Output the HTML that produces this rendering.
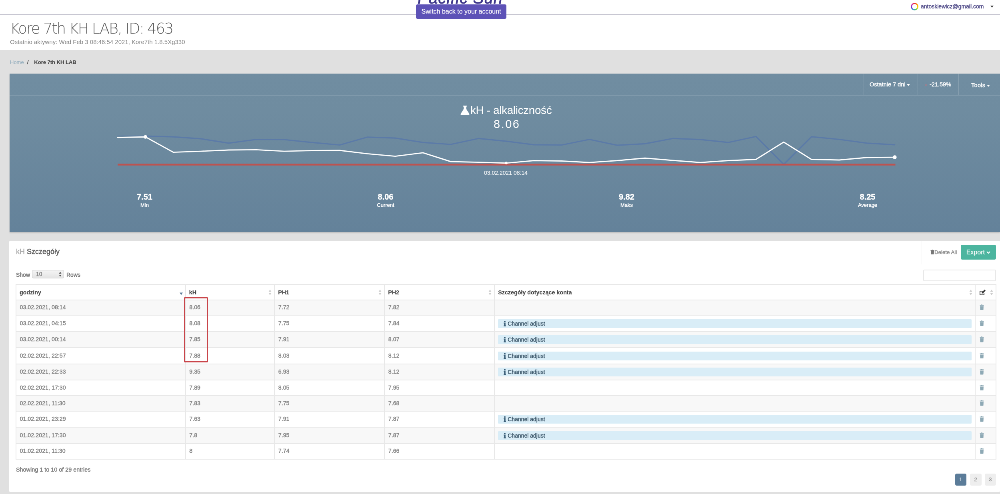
<!DOCTYPE html>
<html lang="pl"><head><meta charset="utf-8"><title>Kore 7th KH LAB</title>
<style>
*{box-sizing:border-box;margin:0;padding:0}
html,body{width:1000px;height:494px;overflow:hidden;background:#e0e0e0}
body{font-family:"Liberation Sans",sans-serif;color:#555;-webkit-text-stroke:.45px}
#w{will-change:transform;position:absolute;left:0;top:0;width:2500px;height:1235px;transform:scale(.4);transform-origin:0 0;background:#e0e0e0;overflow:hidden}
.abs{position:absolute}
#nav{position:absolute;left:0;top:0;width:2500px;height:36px;background:#fff;border-bottom:1.5px solid #7f7ca8}
#logo{-webkit-text-stroke:.9px;position:absolute;left:1044px;top:-25.500px;font-size:40px;font-style:italic;color:#3b3489;letter-spacing:1.2px;white-space:nowrap;line-height:41px}
#sw{-webkit-text-stroke:.2px;z-index:5;position:absolute;left:1040px;top:11px;width:226px;height:36px;background:#5d52b7;border-radius:4px;color:#fff;font-size:16px;line-height:36px;text-align:center;white-space:nowrap}
#ring{position:absolute;left:2277px;top:7px;width:19px;height:19px;border-radius:50%;background:conic-gradient(#e33,#f90,#fd0,#5c5,#39d,#63c,#d3a,#e33)}
#ring:after{content:"";position:absolute;left:3px;top:3px;width:13px;height:13px;border-radius:50%;background:#fff}
#mail{position:absolute;left:2302px;top:8px;font-size:14px;line-height:16px;color:#4b4685;white-space:nowrap}
#caret{position:absolute;left:2476px;top:14px;border:4px solid transparent;border-top:5px solid #444}
#hdr{position:absolute;left:0;top:37px;width:2500px;height:88px;background:#fff}
#title{-webkit-text-stroke:0;font-family:"DejaVu Sans","Liberation Sans",sans-serif;font-weight:200;position:absolute;left:25px;top:51.5px;font-size:37px;line-height:40px;letter-spacing:-2.2px;color:#5a5a5a;white-space:nowrap}
#sub{-webkit-text-stroke:0;position:absolute;left:25px;top:96px;font-size:15px;line-height:18px;color:#858585;white-space:nowrap}
#bc{position:absolute;left:25px;top:148px;font-size:13px;line-height:16px;white-space:nowrap;color:#444}
#bc a{color:#8eaabb;text-decoration:none;-webkit-text-stroke:0}
#bc i{font-style:normal;margin:0 8px 0 8px}
#bc b{margin-left:6px;-webkit-text-stroke:.15px}
#panel{position:absolute;left:24px;top:184px;width:2476px;height:396px;background:linear-gradient(#708da1,#6f8ca0 25%,#64829a);box-shadow:0 2px 3px rgba(0,0,0,.18)}
#tb{position:absolute;left:0;top:0;width:100%;height:54px}
#tbl{position:absolute;left:0;top:53px;width:100%;height:1.6px;background:rgba(255,255,255,.15)}
.vs{position:absolute;top:0;width:1px;height:54px;background:rgba(255,255,255,.2)}
.tbt{position:absolute;top:19px;font-size:14.5px;line-height:16px;color:#fff;white-space:nowrap}
.car{display:inline-block;border:4px solid transparent;border-top:5px solid #fff;border-bottom:0;vertical-align:middle;margin-left:4px}
#ct{-webkit-text-stroke:0;position:absolute;left:1150px;top:259px;white-space:nowrap;color:#fff;font-size:28px;line-height:34px;letter-spacing:-.4px}
#ct svg{width:25px;height:24px;vertical-align:-3px;margin-right:1px;fill:#fff}
#cv{-webkit-text-stroke:0;position:absolute;left:1234px;top:293px;color:#fff;font-size:29px;line-height:34px;letter-spacing:2.5px;white-space:nowrap}
#dl{-webkit-text-stroke:.15px;position:absolute;left:1210px;top:424px;color:#fff;font-size:14px;line-height:16px;white-space:nowrap;opacity:.9}
.stat{position:absolute;top:480px;width:300px;text-align:center;color:#fff}
.stat b{display:block;font-size:20px;line-height:24px}
.stat span{display:block;font-size:13px;line-height:15px;margin-top:1px}
#card{position:absolute;left:23px;top:602px;width:2477px;height:628px;border-radius:3px;background:#fff}
#ch{position:absolute;left:40px;top:618px;font-size:18px;line-height:22px;color:#555;white-space:nowrap}
#ch span{color:#aaa}
#cvs{position:absolute;left:2304px;top:603px;width:1px;height:58px;background:#eee}
#del{position:absolute;left:2326px;top:623px;font-size:13.3px;line-height:16px;color:#8a8a8a;white-space:nowrap}
#del svg{width:10px;height:12px;fill:#777;vertical-align:-1px}
#exp{-webkit-text-stroke:.2px;position:absolute;left:2402px;top:612px;width:88px;height:37px;border-radius:4px;background:#4cb59f;color:#fff;font-size:16px;line-height:37px;text-align:center;white-space:nowrap}
#show{position:absolute;left:40px;top:679px;font-size:14px;line-height:16px;color:#6e6e6e;white-space:nowrap}
#sel{position:absolute;left:80px;top:675px;width:80px;height:21px;border:1px solid #ccc;border-radius:4px;background:linear-gradient(#f4f4f4,#e4e4e4);font-size:14px;line-height:19px;padding-left:9px;color:#808080}
#sel svg{position:absolute;right:5px;top:3px;width:7px;height:13px;fill:#555}
#rows{position:absolute;left:166px;top:679px;font-size:14px;line-height:16px;color:#6e6e6e}
#srch{position:absolute;left:2308px;top:674px;width:182px;height:29px;border:2px solid #e8e8e8;border-radius:3px;background:#fff}
table{position:absolute;left:39px;top:710.1px;width:2450px;border-collapse:collapse;table-layout:fixed;font-size:14.3px;color:#808080}
th,td{border:2px solid #e8e8e8;padding:0 0 0 8.5px;text-align:left;white-space:nowrap;overflow:hidden;position:relative}
th{-webkit-text-stroke:.15px;height:38.5px;font-weight:bold;color:#444;font-size:14.3px;padding-left:8px;padding-top:2px}
td{height:38.75px;padding-bottom:1.5px}
tr.b td{height:40.5px}
tr.odd td{background:#f8f8f8}
tr.even td{background:#fff}
.sort{position:absolute;right:6px;top:12px;width:8px;height:14px;fill:#cdcdcd}
.sort.act{fill:#5b7c99}
td.bd{padding:0 8px 0 8px}
.badge{height:22px;background:#d9edf7;border-radius:2px;color:#3a5568;font-size:14px;line-height:22px;padding-left:14px}
.badge .info{width:6px;height:14px;fill:#3d6079;vertical-align:-2px;margin-right:4px}
td.tc{padding:0;text-align:center}
.trash{width:11px;height:14.5px;fill:#8ea9b5;vertical-align:middle;margin-left:-19px;margin-top:-4px}
#rr{position:absolute;left:460px;top:742.5px;width:60px;height:163.5px;border:3px solid #c9454a;border-radius:2px}
#info{position:absolute;left:40px;top:1166px;font-size:14.4px;line-height:16px;color:#777;white-space:nowrap}
.pg{-webkit-text-stroke:.3px;position:absolute;top:1184px;height:30px;width:28.5px;border-radius:4px;font-size:13.5px;line-height:30px;text-align:center;background:#eee;color:#8f8f8f}
.pg.on{background:#5b7c99;color:#fff;-webkit-text-stroke:0}
</style></head><body>
<div id="w">
<div id="nav"></div>
<div id="logo">Pacific Sun</div>
<div id="sw">Switch back to your account</div>
<div id="ring"></div><div id="mail">antoskiewicz@gmail.com</div><div id="caret"></div>
<div id="hdr"></div>
<div id="title">Kore 7th KH LAB, ID: 463</div>
<div id="sub">Ostatnio aktywny: Wed Feb 3 08:46:54 2021, Kore7th 1.8.5Xg330</div>
<div id="bc"><a>Home</a><i>/</i><b>Kore 7th KH LAB</b></div>

<div id="panel">
 <div id="tbl"></div><div id="tb">
  <div class="vs" style="left:2135px"></div><div class="vs" style="left:2270px"></div><div class="vs" style="left:2372px"></div>
  <div class="tbt" style="left:2150px">Ostatnie 7 dni<span class="car"></span></div>
  <div class="tbt" style="left:2287px"><span style="color:#c9727c;font-size:8px;margin-right:5px;-webkit-text-stroke:0">&#9660;</span>-21.59%</div>
  <div class="tbt" style="left:2404px;top:21px;letter-spacing:.3px">Tools<span class="car"></span></div>
 </div>
</div>
<svg class="abs" style="left:0;top:0" width="2500" height="700" viewBox="0 0 2500 700">
 <polyline points="294.2,338.5 363.6,340.0" fill="none" stroke="#5577b0" stroke-opacity=".22" stroke-width="3" stroke-linecap="round"/>
 <polyline points="363.6,340.0 433.0,342.2 502.4,346.9 571.8,357.8 641.1,348.5 710.5,349.0 779.9,356.2 849.2,362.5 918.6,342.8 988.0,345.2 1057.4,356.2 1126.8,361.0 1196.1,346.2 1265.5,353.1 1334.9,361.9 1404.2,362.5 1473.6,348.5 1543.0,363.1 1612.4,359.4 1681.8,346.2 1751.1,348.8 1820.5,356.2 1889.9,341.2 1959.2,411.0 2028.6,341.8 2098.0,348.5 2167.4,357.8 2236.8,361.9" fill="none" stroke="#5676ab" stroke-opacity=".78" stroke-width="3.2" stroke-linejoin="round" stroke-linecap="round"/>
 <line x1="294.2" y1="411.5" x2="2238.5" y2="411.5" stroke="#bd5350" stroke-width="4.4"/>
 <polyline points="294.2,343.8 363.6,342.2 433.0,380.6 502.4,378.1 571.8,375.0 641.1,374.4 710.5,378.1 779.9,376.5 849.2,376.0 918.6,384.4 988.0,390.6 1057.4,381.9 1126.8,404.0 1196.1,405.6 1265.5,407.8 1334.9,401.5 1404.2,402.5 1473.6,406.2 1543.0,401.5 1612.4,395.2 1681.8,401.0 1751.1,406.2 1820.5,401.5 1889.9,398.5 1959.2,355.2 2028.6,398.5 2098.0,400.0 2167.4,393.8 2236.8,393.1" fill="none" stroke="#fff" stroke-width="2.9" stroke-linejoin="round" stroke-linecap="round"/>
 <circle cx="363.6" cy="342.2" r="4.5" fill="#fff"/>
 <circle cx="1265.5" cy="407.5" r="3.2" fill="#fff"/>
 <circle cx="2236.8" cy="393.1" r="4.8" fill="#fff"/>
</svg>
<div id="ct"><svg viewBox="0 0 23 24"><path d="M7 0h9v2.4h-1.3v6.2l7.4 11.6c1 1.7.1 3.8-2 3.800H2.900c-2.100 0-3-2.100-2-3.800L8.300 8.600V2.400H7z"/></svg>kH - alkaliczność</div>
<div id="cv">8.06</div>
<div id="dl">03.02.2021 08:14</div>
<div class="stat" style="left:211.5px"><b>7.51</b><span>Min</span></div>
<div class="stat" style="left:814.0px"><b>8.06</b><span>Current</span></div>
<div class="stat" style="left:1416.5px"><b>9.82</b><span>Maks</span></div>
<div class="stat" style="left:2019.0px"><b>8.25</b><span>Average</span></div>

<div id="card"></div>
<div id="ch"><span>kH</span> Szczegóły</div>
<div id="cvs"></div>
<div id="del"><svg  viewBox="0 0 12 14" preserveAspectRatio="none"><path d="M.6 1.500h3.500L4.600.2h2.800l.5 1.300h3.500v1.900H.6z M1.200 4.300h9.600l-.4 8.400c-.05.800-.6 1.300-1.400 1.300H3c-.8 0-1.350-.5-1.400-1.300z"/></svg>Delete All</div>
<div id="exp">Export <svg width="10" height="7" viewBox="0 0 10 7" style="vertical-align:1px"><path d="M1 1l4 4 4-4" fill="none" stroke="#fff" stroke-width="2.2"/></svg></div>
<div id="show">Show</div><div id="sel">10<svg  viewBox="0 0 8 14"><path d="M4 0l3.6 5.4H.4z M4 14L.4 8.6h7.2z"/></svg></div><div id="rows">Rows</div>
<div id="srch"></div>
<table>
<colgroup><col style="width:423.75px"><col style="width:222.5px"><col style="width:275px"><col style="width:275px"><col style="width:1201.25px"><col style="width:52.5px"></colgroup>
<tr><th>godziny<svg class="sort act" viewBox="0 0 8 14"><path d="M4 13.500L0 7.500h8z"/></svg></th><th>kH<svg class="sort" viewBox="0 0 8 14"><path d="M4 0l3.6 5.4H.4z M4 14L.4 8.6h7.2z"/></svg></th><th>PH1<svg class="sort" viewBox="0 0 8 14"><path d="M4 0l3.6 5.4H.4z M4 14L.4 8.6h7.2z"/></svg></th><th>PH2<svg class="sort" viewBox="0 0 8 14"><path d="M4 0l3.6 5.4H.4z M4 14L.4 8.6h7.2z"/></svg></th><th>Szczegóły dotyczące konta<svg class="sort" viewBox="0 0 8 14"><path d="M4 0l3.6 5.4H.4z M4 14L.4 8.6h7.2z"/></svg></th><th style="padding:0"><svg style="position:absolute;left:9px;top:12px;width:17px;height:15px" viewBox="0 0 17 15"><path d="M1 3h8v1.800H2.800v7.400h8.400V8.500H13V14H1z M6 9.500l.6-2.700L13.400 0 16 2.600 9.200 9.400z" fill="#333"/></svg><svg class="sort" viewBox="0 0 8 14"><path d="M4 0l3.6 5.4H.4z M4 14L.4 8.6h7.2z"/></svg></th></tr>
<tr class="odd"><td>03.02.2021, 08:14</td><td>8.06</td><td>7.72</td><td>7.82</td><td class="bd"></td><td class="tc"><svg class="trash" viewBox="0 0 12 14" preserveAspectRatio="none"><path d="M.6 1.500h3.500L4.600.2h2.800l.5 1.300h3.500v1.900H.6z M1.200 4.300h9.600l-.4 8.400c-.05.800-.6 1.300-1.400 1.300H3c-.8 0-1.350-.5-1.400-1.300z"/></svg></td></tr>
<tr class="even b"><td>03.02.2021, 04:15</td><td>8.08</td><td>7.75</td><td>7.84</td><td class="bd"><div class="badge"><svg class="info" viewBox="0 0 6 16" preserveAspectRatio="none"><path d="M1 0h3.800v3.600H1z M.2 5h4.600v8.200h1V16H.2v-2.800h1V7.800h-1z"/></svg><span>Channel adjust</span></div></td><td class="tc"><svg class="trash" viewBox="0 0 12 14" preserveAspectRatio="none"><path d="M.6 1.500h3.500L4.600.2h2.800l.5 1.300h3.500v1.900H.6z M1.200 4.300h9.600l-.4 8.400c-.05.800-.6 1.300-1.400 1.300H3c-.8 0-1.350-.5-1.400-1.300z"/></svg></td></tr>
<tr class="odd b"><td>03.02.2021, 00:14</td><td>7.85</td><td>7.91</td><td>8.07</td><td class="bd"><div class="badge"><svg class="info" viewBox="0 0 6 16" preserveAspectRatio="none"><path d="M1 0h3.800v3.600H1z M.2 5h4.600v8.200h1V16H.2v-2.800h1V7.800h-1z"/></svg><span>Channel adjust</span></div></td><td class="tc"><svg class="trash" viewBox="0 0 12 14" preserveAspectRatio="none"><path d="M.6 1.500h3.500L4.600.2h2.800l.5 1.300h3.500v1.900H.6z M1.200 4.300h9.600l-.4 8.400c-.05.800-.6 1.300-1.400 1.300H3c-.8 0-1.350-.5-1.400-1.300z"/></svg></td></tr>
<tr class="even b"><td>02.02.2021, 22:57</td><td>7.88</td><td>8.03</td><td>8.12</td><td class="bd"><div class="badge"><svg class="info" viewBox="0 0 6 16" preserveAspectRatio="none"><path d="M1 0h3.800v3.600H1z M.2 5h4.600v8.200h1V16H.2v-2.800h1V7.800h-1z"/></svg><span>Channel adjust</span></div></td><td class="tc"><svg class="trash" viewBox="0 0 12 14" preserveAspectRatio="none"><path d="M.6 1.500h3.500L4.600.2h2.800l.5 1.300h3.500v1.900H.6z M1.200 4.300h9.600l-.4 8.400c-.05.800-.6 1.300-1.400 1.300H3c-.8 0-1.350-.5-1.400-1.300z"/></svg></td></tr>
<tr class="odd b"><td>02.02.2021, 22:33</td><td>9.35</td><td>6.93</td><td>8.12</td><td class="bd"><div class="badge"><svg class="info" viewBox="0 0 6 16" preserveAspectRatio="none"><path d="M1 0h3.800v3.600H1z M.2 5h4.600v8.200h1V16H.2v-2.800h1V7.800h-1z"/></svg><span>Channel adjust</span></div></td><td class="tc"><svg class="trash" viewBox="0 0 12 14" preserveAspectRatio="none"><path d="M.6 1.500h3.500L4.600.2h2.800l.5 1.300h3.500v1.900H.6z M1.200 4.300h9.600l-.4 8.400c-.05.800-.6 1.300-1.400 1.300H3c-.8 0-1.350-.5-1.400-1.300z"/></svg></td></tr>
<tr class="even"><td>02.02.2021, 17:30</td><td>7.89</td><td>8.05</td><td>7.95</td><td class="bd"></td><td class="tc"><svg class="trash" viewBox="0 0 12 14" preserveAspectRatio="none"><path d="M.6 1.500h3.500L4.600.2h2.800l.5 1.300h3.500v1.900H.6z M1.200 4.300h9.600l-.4 8.400c-.05.800-.6 1.300-1.400 1.300H3c-.8 0-1.350-.5-1.400-1.300z"/></svg></td></tr>
<tr class="odd"><td>02.02.2021, 11:30</td><td>7.83</td><td>7.75</td><td>7.68</td><td class="bd"></td><td class="tc"><svg class="trash" viewBox="0 0 12 14" preserveAspectRatio="none"><path d="M.6 1.500h3.500L4.600.2h2.800l.5 1.300h3.500v1.900H.6z M1.200 4.300h9.600l-.4 8.400c-.05.800-.6 1.300-1.400 1.300H3c-.8 0-1.350-.5-1.400-1.300z"/></svg></td></tr>
<tr class="even b"><td>01.02.2021, 23:29</td><td>7.63</td><td>7.91</td><td>7.87</td><td class="bd"><div class="badge"><svg class="info" viewBox="0 0 6 16" preserveAspectRatio="none"><path d="M1 0h3.800v3.600H1z M.2 5h4.600v8.200h1V16H.2v-2.800h1V7.800h-1z"/></svg><span>Channel adjust</span></div></td><td class="tc"><svg class="trash" viewBox="0 0 12 14" preserveAspectRatio="none"><path d="M.6 1.500h3.500L4.600.2h2.800l.5 1.300h3.500v1.900H.6z M1.200 4.300h9.600l-.4 8.400c-.05.800-.6 1.300-1.400 1.300H3c-.8 0-1.350-.5-1.400-1.300z"/></svg></td></tr>
<tr class="odd b"><td>01.02.2021, 17:30</td><td>7.8</td><td>7.95</td><td>7.87</td><td class="bd"><div class="badge"><svg class="info" viewBox="0 0 6 16" preserveAspectRatio="none"><path d="M1 0h3.800v3.600H1z M.2 5h4.600v8.200h1V16H.2v-2.800h1V7.800h-1z"/></svg><span>Channel adjust</span></div></td><td class="tc"><svg class="trash" viewBox="0 0 12 14" preserveAspectRatio="none"><path d="M.6 1.500h3.500L4.600.2h2.800l.5 1.300h3.500v1.900H.6z M1.200 4.300h9.600l-.4 8.400c-.05.800-.6 1.300-1.400 1.300H3c-.8 0-1.350-.5-1.400-1.300z"/></svg></td></tr>
<tr class="even"><td>01.02.2021, 11:30</td><td>8</td><td>7.74</td><td>7.66</td><td class="bd"></td><td class="tc"><svg class="trash" viewBox="0 0 12 14" preserveAspectRatio="none"><path d="M.6 1.500h3.500L4.600.2h2.800l.5 1.300h3.500v1.900H.6z M1.200 4.300h9.600l-.4 8.400c-.05.800-.6 1.300-1.400 1.300H3c-.8 0-1.350-.5-1.400-1.300z"/></svg></td></tr>
</table>
<div id="rr"></div>
<div id="info">Showing 1 to 10 of 29 entries</div>
<div class="pg on" style="left:2387.5px">1</div><div class="pg" style="left:2425px">2</div><div class="pg" style="left:2461.5px">3</div>
</div>
</body></html>
